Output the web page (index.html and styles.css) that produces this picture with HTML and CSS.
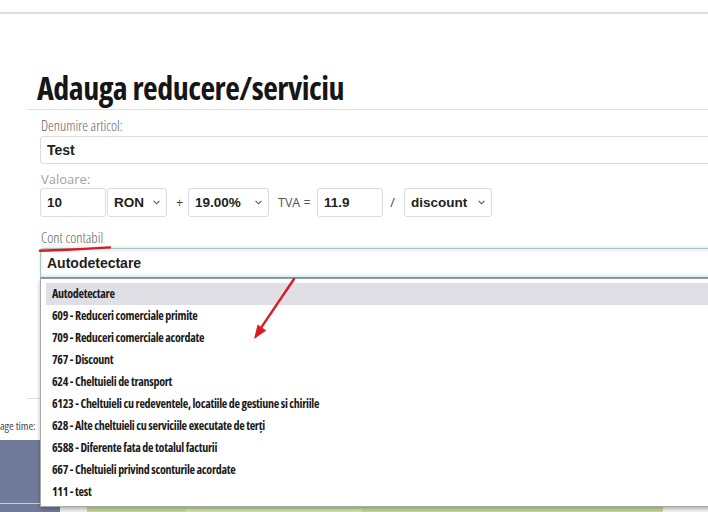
FILE: index.html
```html
<!DOCTYPE html>
<html lang="ro">
<head>
<meta charset="utf-8">
<title>Adauga reducere/serviciu</title>
<link rel="stylesheet" href="styles.css">
</head>
<body>
<div class="topline"></div>

<section class="modal">
  <h1 class="modal-title">Adauga reducere/serviciu</h1>
  <div class="title-rule"></div>

  <form class="form">
    <label class="lbl lbl-first">Denumire articol:</label>
    <input class="field field-wide" type="text" value="Test">

    <label class="lbl lbl-soft">Valoare:</label>
    <div class="row">
      <input class="field field-num" type="text" value="10">
      <div class="select sel-cur"><span>RON</span><svg class="chev" viewBox="0 0 7 5"><polyline points="0.6,0.8 3.5,3.8 6.4,0.8"/></svg></div>
      <span class="op op-plus">+</span>
      <div class="select sel-vat"><span>19.00%</span><svg class="chev" viewBox="0 0 7 5"><polyline points="0.6,0.8 3.5,3.8 6.4,0.8"/></svg></div>
      <span class="op op-tva">TVA =</span>
      <input class="field field-num" type="text" value="11.9">
      <span class="op op-slash">/</span>
      <div class="select sel-type"><span>discount</span><svg class="chev" viewBox="0 0 7 5"><polyline points="0.6,0.8 3.5,3.8 6.4,0.8"/></svg></div>
    </div>

    <label class="lbl lbl-acc">Cont contabil</label>
    <div class="combo">
      <div class="combo-input">Autodetectare</div>
      <ul class="combo-list">
        <li class="is-active">Autodetectare</li>
        <li>609 - Reduceri comerciale primite</li>
        <li>709 - Reduceri comerciale acordate</li>
        <li>767 - Discount</li>
        <li>624 - Cheltuieli de transport</li>
        <li>6123 - Cheltuieli cu redeventele, locatiile de gestiune si chiriile</li>
        <li>628 - Alte cheltuieli cu serviciile executate de terți</li>
        <li>6588 - Diferente fata de totalul facturii</li>
        <li>667 - Cheltuieli privind sconturile acordate</li>
        <li>111 - test</li>
      </ul>
    </div>
  </form>

  <div class="modal-foot"></div>
</section>

<div class="pagetime"><span>age time:</span></div>

<div class="page-bottom">
  <div class="pb-side"></div>
  <div class="pb-gap"></div>
  <div class="pb-main"><div class="pb-btn"></div></div>
  <div class="pb-rest"></div>
</div>

<svg class="marks" width="708" height="512" viewBox="0 0 708 512">
  <path class="mark-line" d="M40 250.8 Q75 249.8 110 247.4"/>
  <line class="mark-line" x1="294" y1="279" x2="261" y2="327.8"/>
  <polygon class="mark-head" points="254,339 266.2,330.4 257.6,324.4"/>
</svg>
</body>
</html>
```

FILE: styles.css
```css
* {
  box-sizing: border-box;
}

html,
body {
  margin: 0;
  padding: 0;
}

body {
  position: relative;
  width: 708px;
  height: 512px;
  overflow: hidden;
  background: #ffffff;
  font-family: "Open Sans", "Liberation Sans", sans-serif;
  color: #222222;
}

.topline {
  margin-top: 12px;
  height: 2px;
  background: #dedede;
}

/* modal */
.modal {
  padding-left: 27px;
}

.modal-title {
  margin: 54px 0 0 10px;
  font-size: 32px;
  line-height: 40px;
  font-weight: 700;
  font-stretch: 75%;
  letter-spacing: -0.5px;
  color: #161616;
  white-space: nowrap;
}

.title-rule {
  margin-top: 1px;
  width: 720px;
  border-top: 1px solid #e2e2e2;
}

.form {
  margin: 0;
  padding-left: 13px;
}

.lbl {
  display: block;
  font-size: 14.5px;
  line-height: 16px;
  font-weight: 300;
  font-stretch: 75%;
  color: #626262;
  padding-left: 1px;
}

.lbl-first {
  margin-top: 8px;
}

.lbl-soft {
  margin-top: 7px;
  font-size: 13px;
  font-weight: 400;
  font-stretch: 100%;
  color: #a3a3a3;
}

.lbl-acc {
  margin-top: 13px;
}

.field {
  display: block;
  margin: 0;
  border: 1px solid #dcdcdc;
  border-radius: 3px;
  background: #ffffff;
  padding: 0 6px;
  font-family: "Liberation Sans", Arial, sans-serif;
  font-weight: 700;
  color: #222222;
  outline: none;
}

.field-wide {
  margin-top: 2px;
  width: 720px;
  height: 28px;
  font-size: 14px;
}

/* value row */
.row {
  margin-top: 1px;
  display: flex;
  align-items: center;
  height: 29px;
}

.field-num {
  width: 66px;
  height: 29px;
  font-size: 13.5px;
}

.select {
  display: flex;
  align-items: center;
  height: 29px;
  border: 1px solid #dcdcdc;
  border-radius: 3px;
  background: #ffffff;
  padding: 0 6px 0 6px;
  font-family: "Liberation Sans", Arial, sans-serif;
  font-weight: 700;
  font-size: 13.5px;
  color: #222222;
}

.chev {
  margin-left: auto;
  width: 7px;
  height: 5px;
  fill: none;
  stroke: #555555;
  stroke-width: 1.1;
}

.sel-cur {
  margin-left: 1px;
  width: 60px;
}

.sel-vat {
  width: 81px;
}

.sel-type {
  width: 88px;
}

.op {
  font-size: 12.5px;
  color: #444444;
  line-height: 16px;
}

.op-plus,
.op-slash {
  width: 21px;
  text-align: center;
}

.op-plus {
  padding-left: 4px;
}

.op-slash {
  padding-right: 2px;
}

.op-tva {
  width: 48px;
  padding-left: 9px;
  color: #555555;
  white-space: nowrap;
}

/* account combo */
.combo {
  position: relative;
  margin-top: 2px;
}

.combo-input {
  height: 30px;
  width: 720px;
  border: 1px solid #b3c1c9;
  border-bottom-color: #8d9aa4;
  border-radius: 3px 3px 0 0;
  padding: 0 6px;
  display: flex;
  align-items: center;
  font-family: "Liberation Sans", Arial, sans-serif;
  font-weight: 700;
  font-size: 14px;
  color: #1e1e1e;
  background: #ffffff;
  box-shadow: 0 -1px 3px rgba(150, 225, 160, 0.45), inset 0 2px 3px rgba(220, 235, 248, 0.9), inset 0 -2px 3px rgba(220, 235, 248, 0.9);
}

.combo-list {
  position: absolute;
  z-index: 2;
  top: 100%;
  left: 0;
  width: 720px;
  margin: 0;
  padding: 4px 0 3px 5px;
  list-style: none;
  background: #ffffff;
  border: 1px solid #a8a8a8;
  border-top-color: #8d9aa4;
  box-shadow: 0 2px 4px rgba(0, 0, 0, 0.28);
}

.combo-list li {
  height: 22px;
  line-height: 22px;
  padding-left: 6px;
  font-size: 12px;
  font-weight: 750;
  font-stretch: 75%;
  letter-spacing: -0.3px;
  color: #1a1a1a;
  white-space: nowrap;
}

.combo-list li.is-active {
  background: #e0dfe5;
}

.modal-foot {
  margin-top: 120px;
  width: 720px;
  border-top: 1px solid #dcdcdc;
}

/* page behind the dialog */
.pagetime {
  height: 41px;
  padding-top: 20px;
  font-size: 11.5px;
  font-stretch: 85%;
  letter-spacing: -0.1px;
  line-height: 14px;
  color: #4a4a4a;
  white-space: nowrap;
}

.page-bottom {
  display: flex;
  height: 72px;
}

.pb-side {
  width: 60px;
  background: #717b99;
  border-bottom: 8px solid #717b99;
  box-shadow: inset 0 -9px 0 -8px #c9cdd9;
}

.pb-gap {
  width: 27px;
  background: #f3f3f3;
}

.pb-main {
  position: relative;
  width: 576px;
  background: #c6db95;
}

.pb-btn {
  position: absolute;
  left: 98px;
  bottom: 0;
  width: 176px;
  height: 3px;
  background: #d3e4ae;
}

.pb-rest {
  flex: 1;
  background: #f4f4f4;
}

/* red annotation strokes */
.marks {
  position: absolute;
  z-index: 3;
  top: 0;
  left: 0;
  pointer-events: none;
}

.mark-line {
  fill: none;
  stroke: #dc1a1f;
  stroke-width: 2.4;
  stroke-linecap: round;
}

.mark-head {
  fill: #dc1a1f;
}
```
